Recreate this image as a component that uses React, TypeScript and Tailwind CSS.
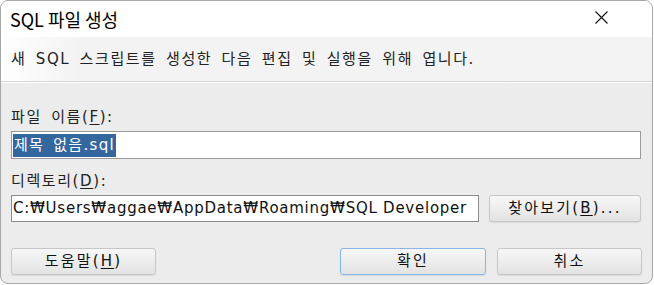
import React from 'react';

const titleFont = { fontFamily: '"Noto Sans CJK KR", "Liberation Sans", sans-serif' };
const bodyFont = { fontFamily: '"DejaVu Sans", "Noto Sans CJK KR", sans-serif' };

const Mn: React.FC<{ c: string }> = ({ c }) => <span className="underline underline-offset-2">{c}</span>;

const Btn: React.FC<{ w: string; focus?: boolean; children: React.ReactNode }> = ({ w, focus, children }) => (
    <button
        className={`${w} h-[27px] rounded-[3px] border bg-gradient-to-b from-[#f7f7f7] to-[#e3e3e3] text-[15px] tracking-[2.2px] text-[#111] flex items-center justify-center shadow-[0_1px_1px_rgba(0,0,0,0.08)] ${focus ? 'border-[#86b6e6]' : 'border-[#c6c6c6]'}`}
        style={bodyFont}
    >
        {children}
    </button>
);

const App: React.FC = () => {
    return (
        <div className="w-[654px] h-[285px] bg-white overflow-hidden" style={bodyFont}>
            <div className="w-[653px] h-[284px] flex flex-col bg-[#ececec] border border-[#a8a8a8] rounded-[8px] overflow-hidden">
                {/* title bar */}
                <div className="h-[36px] bg-white flex items-center justify-between shrink-0">
                    <span className="pl-[9px] text-[18px] text-black leading-none" style={titleFont}>SQL 파일 생성</span>
                    <svg width="13" height="13" viewBox="0 0 13 13" className="mr-[44px] -mt-[3px]">
                        <path d="M0.5 0.5 L12.5 12.5 M12.5 0.5 L0.5 12.5" stroke="#111" strokeWidth="1.1" />
                    </svg>
                </div>

                {/* header */}
                <div className="h-[45px] bg-gradient-to-r from-white to-[#f3f3f3] to-[12%] flex items-center pl-[10px] border-b border-[#d4d4d4] shrink-0">
                    <span className="text-[15px] tracking-[1.6px] [word-spacing:3px] text-[#222]">새 SQL 스크립트를 생성한 다음 편집 및 실행을 위해 엽니다.</span>
                </div>
                <div className="h-px bg-white shrink-0" />

                {/* body */}
                <div className="flex flex-col px-[10px] pt-[25px]">
                    <span className="text-[15px] tracking-[1.6px] [word-spacing:3px] text-[#222] leading-[18px]">
                        파일 이름(<Mn c="F" />):
                    </span>
                    <div className="mt-[5px] w-[630px] h-[28px] bg-white border border-[#9a9a9a] flex items-center px-[1px]">
                        <span className="bg-[#35679f] text-white text-[15px] tracking-[1.3px] [word-spacing:3px] leading-[23px] px-[1px]">제목 없음.sql</span>
                    </div>

                    <span className="mt-[13px] text-[15px] tracking-[1.6px] text-[#222] leading-[18px]">
                        디렉토리(<Mn c="D" />):
                    </span>
                    <div className="mt-[5px] flex items-center gap-[10px]">
                        <div className="w-[468px] h-[27px] bg-white border border-[#8c8c8c] flex items-center px-[1px] overflow-hidden">
                            <span className="text-[15px] tracking-[0.75px] text-[#111] whitespace-nowrap">C:₩Users₩aggae₩AppData₩Roaming₩SQL Developer</span>
                        </div>
                        <Btn w="w-[152px]">
                            찾아보기(<Mn c="B" />)...
                        </Btn>
                    </div>

                    <div className="mt-[26px] flex items-center">
                        <Btn w="w-[145px]">
                            도움말(<Mn c="H" />)
                        </Btn>
                        <div className="ml-auto flex gap-[11px]">
                            <Btn w="w-[146px]" focus>
                                확인
                            </Btn>
                            <Btn w="w-[145px]">취소</Btn>
                        </div>
                    </div>
                </div>
            </div>
        </div>
    );
};

export default App;
